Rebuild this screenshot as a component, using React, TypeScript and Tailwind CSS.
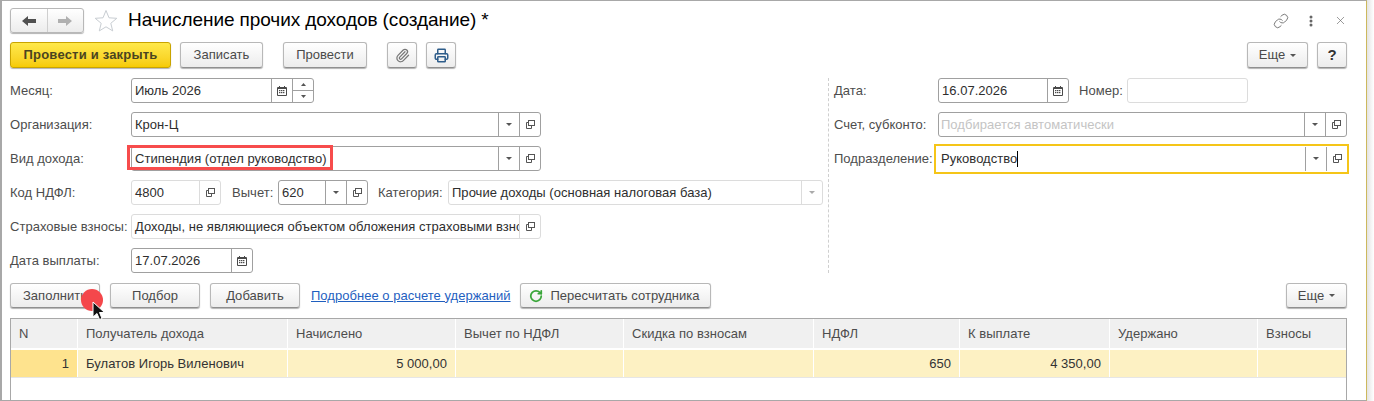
import { Link, Paperclip, Printer, X, RotateCw } from "lucide-react";
import type { ReactNode } from "react";

const CalendarIcon = () => (
  <svg width="10" height="10" viewBox="0 0 10 10">
    <rect x="0" y="1" width="10" height="9" rx="1" fill="#4a4a4a" />
    <rect x="2" y="0" width="1" height="2" fill="#4a4a4a" />
    <rect x="7" y="0" width="1" height="2" fill="#4a4a4a" />
    <rect x="1" y="3" width="8" height="6" fill="#fff" />
    {[2, 4, 6].map((x) =>
      [4, 6].map((y) => <rect key={`${x}-${y}`} x={x} y={y} width="1.4" height="1.2" fill="#4a4a4a" />)
    )}
  </svg>
);

const OpenIcon = () => (
  <svg width="9" height="9" viewBox="0 0 9 9" fill="none" stroke="#555" strokeWidth="1">
    <rect x="2.5" y="0.5" width="6" height="5" fill="#fff" />
    <path d="M2.5 2.5H0.5V8.5H5.5V5.5" />
  </svg>
);

const Caret = ({ color = "#555" }: { color?: string }) => (
  <svg width="6" height="3" viewBox="0 0 6 3">
    <path d="M0 0H6L3 3Z" fill={color} />
  </svg>
);

const NavArrow = ({ color, flip }: { color: string; flip?: boolean }) => (
  <svg width="14" height="10" viewBox="0 0 14 10" className={flip ? "rotate-180" : ""}>
    <path d="M0 5L6 0V3H14V7H6V10Z" fill={color} />
  </svg>
);

function Btn({ children, tall, className = "" }: { children: ReactNode; tall?: boolean; className?: string }) {
  return (
    <button className={`${tall ? "h-[26px]" : "h-[25px]"} flex items-center justify-center rounded-[3px] border border-[#b8b8b8] border-b-[#8f8f8f] bg-gradient-to-b from-white to-[#ececec] shadow-[0_1px_1px_rgba(0,0,0,0.3)] text-[#4a4a4a] ${className}`}>
      {children}
    </button>
  );
}

function Part({ children, muted }: { children: ReactNode; muted?: boolean }) {
  return (
    <div className={`w-[21px] shrink-0 h-full flex items-center justify-center border-l ${muted ? "border-[#dcdcdc]" : "border-[#a0a0a0]"}`}>
      {children}
    </div>
  );
}

function Field({
  value,
  width,
  muted,
  placeholder,
  children,
}: {
  value?: string;
  width: string;
  muted?: boolean;
  placeholder?: boolean;
  children?: ReactNode;
}) {
  return (
    <div className={`h-[25px] flex items-center rounded-[3px] border bg-white ${muted ? "border-[#dcdcdc]" : "border-[#a0a0a0]"} ${width}`}>
      <div className={`flex-1 min-w-0 whitespace-nowrap overflow-hidden ${placeholder ? "pl-[2px] text-[#c4c4c4]" : "pl-[3px] text-[#2e2e2e]"}`}>
        {value}
      </div>
      {children}
    </div>
  );
}

function Row({ children }: { children: ReactNode }) {
  return <div className="h-[25px] flex items-center">{children}</div>;
}

const Label = ({ children, className = "w-[121px]" }: { children: ReactNode; className?: string }) => (
  <div className={`shrink-0 text-[#4d4d4d] whitespace-nowrap ${className}`}>{children}</div>
);

const COLUMNS = [
  { title: "N", width: "w-[67px]" },
  { title: "Получатель дохода", width: "w-[210px]" },
  { title: "Начислено", width: "w-[168px]" },
  { title: "Вычет по НДФЛ", width: "w-[168px]" },
  { title: "Скидка по взносам", width: "w-[190px]" },
  { title: "НДФЛ", width: "w-[146px]" },
  { title: "К выплате", width: "w-[150px]" },
  { title: "Удержано", width: "w-[148px]" },
  { title: "Взносы", width: "flex-1" },
];

const CELLS = [
  { text: "1", right: true },
  { text: "Булатов Игорь Виленович" },
  { text: "5 000,00", right: true },
  { text: "" },
  { text: "" },
  { text: "650", right: true },
  { text: "4 350,00", right: true },
  { text: "" },
  { text: "" },
];

export default function App() {
  return (
    <div className="w-[1374px] h-[401px] overflow-hidden flex bg-white font-['Liberation_Sans',Arial,sans-serif] text-[13px] tracking-[0.03px]">
      <div className="w-[1367px] h-[401px] shrink-0 border-t border-t-[#a8a8a8] border-b border-b-[#a8a8a8] border-l-2 border-l-[#a8a8a8] border-r border-r-[#cdb95e] pl-[8px] pr-[19px]">
        {/* Заголовок */}
        <div className="h-[32px] pt-[7px] flex items-center">
          <div className="w-[74px] h-[25px] flex rounded-[3px] border border-[#b8b8b8] bg-gradient-to-b from-white to-[#ececec] shadow-[0_1px_1px_rgba(0,0,0,0.3)]">
            <div className="flex-1 flex items-center justify-center border-r border-[#cfcfcf]">
              <NavArrow color="#505050" />
            </div>
            <div className="flex-1 flex items-center justify-center">
              <NavArrow color="#b0b0b0" flip />
            </div>
          </div>
          <svg width="24" height="23" viewBox="0 0 24 23" className="ml-[10px]">
            <path d="M12 1.5L15 8.8L22.8 9.3L16.8 14.3L18.7 21.9L12 17.8L5.3 21.9L7.2 14.3L1.2 9.3L9 8.8Z" fill="#fff" stroke="#c8cdd2" strokeWidth="1" />
          </svg>
          <div className="ml-[10px] text-[19px] tracking-[-0.08px] text-black whitespace-nowrap">
            Начисление прочих доходов (создание) *
          </div>
          <div className="ml-auto flex items-center">
            <Link size={16} strokeWidth={1.3} color="#666" />
            <svg width="4" height="12" viewBox="0 0 4 12" className="ml-[20px]">
              <circle cx="2" cy="2" r="1.5" fill="#666" />
              <circle cx="2" cy="6" r="1.5" fill="#666" />
              <circle cx="2" cy="10" r="1.5" fill="#666" />
            </svg>
            <X size={13} strokeWidth={1.2} color="#666" className="ml-[21px]" />
          </div>
        </div>

        {/* Командная панель */}
        <div className="mt-[9px] flex items-center">
          <button className="w-[161px] h-[26px] rounded-[3px] border border-[#c9a400] bg-gradient-to-b from-[#ffe94a] to-[#f6cb00] shadow-[0_1px_1px_rgba(0,0,0,0.3)] font-bold tracking-[0.2px] text-[#4a4420]">
            Провести и закрыть
          </button>
          <Btn tall className="ml-[9px] w-[83px]">Записать</Btn>
          <Btn tall className="ml-[20px] w-[84px]">Провести</Btn>
          <Btn tall className="ml-[20px] w-[30px]">
            <Paperclip size={15} color="#777" />
          </Btn>
          <Btn tall className="ml-[9px] w-[30px]">
            <Printer size={15} color="#2d5c8a" strokeWidth={2.4} />
          </Btn>
          <Btn tall className="ml-auto w-[61px] gap-[5px]">
            Еще <Caret />
          </Btn>
          <Btn tall className="ml-[9px] w-[30px] text-[15px] font-bold text-[#333]">?</Btn>
        </div>

        {/* Реквизиты */}
        <div className="mt-[10px] flex">
          <div className="w-[814px] flex flex-col gap-[9px]">
            <Row>
              <Label>Месяц:</Label>
              <Field value="Июль 2026" width="w-[183px]">
                <Part><CalendarIcon /></Part>
                <div className="w-[21px] h-full flex flex-col border-l border-[#a0a0a0]">
                  <div className="flex-1 flex items-center justify-center border-b border-[#a0a0a0]">
                    <svg width="5" height="3" viewBox="0 0 5 3"><path d="M0 3H5L2.5 0Z" fill="#555" /></svg>
                  </div>
                  <div className="flex-1 flex items-center justify-center">
                    <svg width="5" height="3" viewBox="0 0 5 3"><path d="M0 0H5L2.5 3Z" fill="#555" /></svg>
                  </div>
                </div>
              </Field>
            </Row>
            <Row>
              <Label>Организация:</Label>
              <Field value="Крон-Ц" width="w-[410px]">
                <Part><Caret /></Part>
                <Part><OpenIcon /></Part>
              </Field>
            </Row>
            <Row>
              <Label>Вид дохода:</Label>
              <div className="relative">
                <Field value="Стипендия (отдел руководство)" width="w-[410px]">
                  <Part><Caret /></Part>
                  <Part><OpenIcon /></Part>
                </Field>
                <div className="absolute left-[-4px] top-[-1px] w-[206px] h-[25px] border-[3px] border-[#f74c4c]" />
              </div>
            </Row>
            <Row>
              <Label>Код НДФЛ:</Label>
              <Field value="4800" width="w-[90px]" muted>
                <Part muted><OpenIcon /></Part>
              </Field>
              <Label className="ml-[11px] w-[46px]">Вычет:</Label>
              <Field value="620" width="w-[90px]">
                <Part><Caret /></Part>
                <Part><OpenIcon /></Part>
              </Field>
              <Label className="ml-[10px] w-[70px]">Категория:</Label>
              <Field value="Прочие доходы (основная налоговая база)" width="w-[375px]" muted>
                <Part muted><Caret color="#aaa" /></Part>
              </Field>
            </Row>
            <Row>
              <Label>Страховые взносы:</Label>
              <Field value="Доходы, не являющиеся объектом обложения страховыми взносами" width="w-[410px]" muted>
                <Part muted><OpenIcon /></Part>
              </Field>
            </Row>
            <Row>
              <Label>Дата выплаты:</Label>
              <Field value="17.07.2026" width="w-[122px]">
                <Part><CalendarIcon /></Part>
              </Field>
            </Row>
          </div>

          <div className="ml-[4px] w-[1px] h-[195px] border-l border-dashed border-[#cfcfcf]" />

          <div className="ml-[5px] flex-1 flex flex-col gap-[9px]">
            <Row>
              <Label className="w-[104px]">Дата:</Label>
              <Field value="16.07.2026" width="w-[131px]">
                <Part><CalendarIcon /></Part>
              </Field>
              <Label className="ml-[10px] w-[48px]">Номер:</Label>
              <Field width="w-[121px]" muted />
            </Row>
            <Row>
              <Label className="w-[104px]">Счет, субконто:</Label>
              <Field value="Подбирается автоматически" placeholder width="flex-1">
                <Part><Caret /></Part>
                <Part><OpenIcon /></Part>
              </Field>
            </Row>
            <Row>
              <Label className="w-[100px]">Подразделение:</Label>
              <div className="flex-1 -mr-[2px] h-[30px] flex items-center border-2 border-[#f5c518] bg-white">
                <div className="flex-1 px-[5px] flex items-center text-[#2e2e2e]">
                  Руководство<span className="w-px h-[16px] bg-black" />
                </div>
                <div className="w-[21px] h-[24px] flex items-center justify-center border-l border-[#a0a0a0]"><Caret /></div>
                <div className="w-[21px] h-[24px] flex items-center justify-center border-l border-[#a0a0a0]"><OpenIcon /></div>
              </div>
            </Row>
          </div>
        </div>

        {/* Панель таблицы */}
        <div className="mt-[10px] flex items-center">
          <div className="relative">
            <Btn className="w-[90px]">Заполнить</Btn>
            <div className="absolute left-[71px] top-[6px] w-[22px] h-[22px] rounded-full bg-[#f4474b]" />
            <svg width="14" height="20" viewBox="0 0 14 20" className="absolute left-[82px] top-[18px]">
              <path d="M1 1V16L5 12.5L7.5 18.5L10 17.5L7.5 11.5H12.5Z" fill="#111" stroke="#fff" strokeWidth="1" />
            </svg>
          </div>
          <Btn className="ml-[10px] w-[90px]">Подбор</Btn>
          <Btn className="ml-[10px] w-[90px]">Добавить</Btn>
          <a className="ml-[11px] w-[198px] text-[#1f5fbf] underline whitespace-nowrap">Подробнее о расчете удержаний</a>
          <Btn className="ml-[11px] w-[191px] gap-[7px] pr-[2px]">
            <RotateCw size={14} strokeWidth={3} color="#3aa63a" />
            Пересчитать сотрудника
          </Btn>
          <Btn className="ml-auto w-[61px] gap-[5px]">
            Еще <Caret />
          </Btn>
        </div>

        {/* Таблица */}
        <div className="mt-[10px] h-[91px] border border-[#a8a8a8] border-b-0">
          <div className="h-[31px] flex bg-[#f0f0f0] border-b-2 border-white">
            {COLUMNS.map((c, i) => (
              <div key={c.title} className={`${c.width} flex items-center pl-[8px] border-r border-white text-[#4d4d4d] ${i === 8 ? "border-r-0" : ""}`}>
                {c.title}
              </div>
            ))}
          </div>
          <div className="h-[28px] flex bg-[#fdf1c3] border-b border-[#e6e6e6] text-[#333]">
            {CELLS.map((c, i) => (
              <div
                key={i}
                className={`${COLUMNS[i].width} flex items-center px-[8px] border-r border-white ${c.right ? "justify-end" : ""} ${i === 0 ? "bg-[#fee38e]" : ""} ${i === 8 ? "border-r-0" : ""}`}
              >
                {c.text}
              </div>
            ))}
          </div>
        </div>
      </div>
      <div className="flex-1 h-full bg-gradient-to-r from-[#e4e4e4] to-white" />
    </div>
  );
}
